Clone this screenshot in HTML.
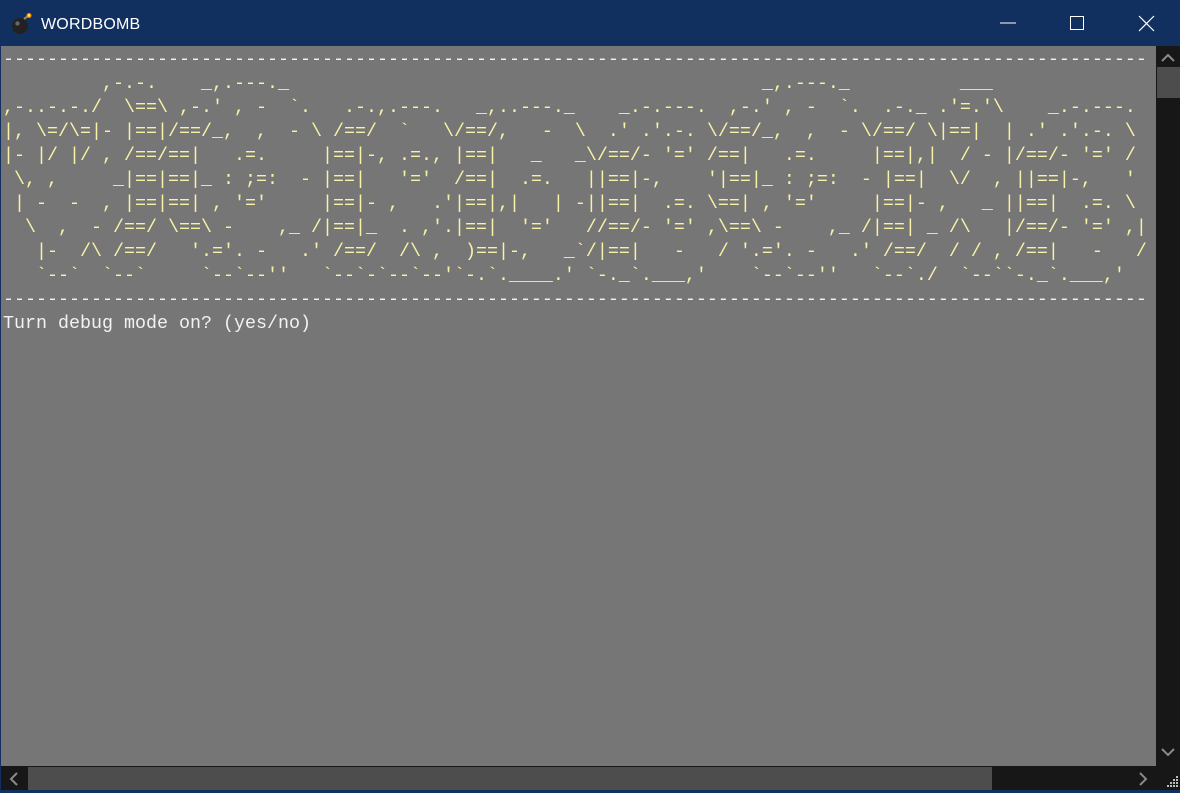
<!DOCTYPE html>
<html><head><meta charset="utf-8"><style>
body{margin:0;width:1180px;height:793px;overflow:hidden;background:#12305f;position:relative;font-family:"Liberation Sans",sans-serif}
#title{position:absolute;left:0;top:0;width:1180px;height:46px;background:#12305f;color:#fff}
#title .t{position:absolute;left:41px;top:16px;font-size:16px;letter-spacing:0.2px}
#con{position:absolute;left:1px;top:46px;width:1155px;height:720px;background:#767676;overflow:hidden}
pre{margin:0;position:absolute;left:2px;top:2px;font-family:"Liberation Mono",monospace;font-size:18.33px;line-height:24px;color:#f2f2f2}
.y{color:#f9f1a5}
#vs{position:absolute;left:1156px;top:46px;width:24px;height:720px;background:#171717}
#vt{position:absolute;left:1157px;top:67px;width:23px;height:31px;background:#4d4d4d}
#hs{position:absolute;left:1px;top:766px;width:1155px;height:24px;background:#171717}
#ht{position:absolute;left:28px;top:767px;width:964px;height:23px;background:#4d4d4d}
#corner{position:absolute;left:1156px;top:766px;width:24px;height:24px;background:#171717}
</style></head><body>
<div id="title">
<svg style="position:absolute;left:10px;top:12px" width="24" height="24" viewBox="0 0 24 24"><circle cx="10" cy="14" r="8" fill="#222"/><circle cx="7.5" cy="11.5" r="2.2" fill="#666"/><path d="M14 7 L18 4" stroke="#a86" stroke-width="2"/><circle cx="19" cy="3.5" r="2.5" fill="#f80"/><circle cx="19" cy="3.5" r="1.2" fill="#ff4"/></svg>
<div class="t">WORDBOMB</div>
<svg style="position:absolute;left:1000px;top:14px" width="160" height="20"><line x1="0" y1="9" x2="16" y2="9" stroke="#fff"/><rect x="70.5" y="2.5" width="13" height="13" fill="none" stroke="#fff"/><path d="M139 2 L154 17 M154 2 L139 17" stroke="#fff" stroke-width="1.2"/></svg>
</div>
<div id="con"><pre>--------------------------------------------------------------------------------------------------------
<span class="y">         ,-.-.    _,.---._                                           _,.---._          ___
,-..-.-./  \==\ ,-.' , -  `.   .-.,.---.   _,..---._    _.-.---.  ,-.' , -  `.  .-._ .'=.'\    _.-.---.
|, \=/\=|- |==|/==/_,  ,  - \ /==/  `   \/==/,   -  \  .' .'.-. \/==/_,  ,  - \/==/ \|==|  | .' .'.-. \
|- |/ |/ , /==/==|   .=.     |==|-, .=., |==|   _   _\/==/- '=' /==|   .=.     |==|,|  / - |/==/- '=' /
 \, ,     _|==|==|_ : ;=:  - |==|   '='  /==|  .=.   ||==|-,    '|==|_ : ;=:  - |==|  \/  , ||==|-,   '
 | -  -  , |==|==| , '='     |==|- ,   .'|==|,|   | -||==|  .=. \==| , '='     |==|- ,   _ ||==|  .=. \
  \  ,  - /==/ \==\ -    ,_ /|==|_  . ,'.|==|  '='   //==/- '=' ,\==\ -    ,_ /|==| _ /\   |/==/- '=' ,|
   |-  /\ /==/   '.='. -   .' /==/  /\ ,  )==|-,   _`/|==|   -   / '.='. -   .' /==/  / / , /==|   -   /
   `--`  `--`     `--`--''   `--`-`--`--'`-.`.____.' `-._`.___,'    `--`--''   `--`./  `--``-._`.___,'</span>
--------------------------------------------------------------------------------------------------------
Turn debug mode on? (yes/no)</pre></div>
<div id="vs"></div><div id="vt"></div>
<svg style="position:absolute;left:1160px;top:52px" width="16" height="12"><path d="M2 9 L8 3 L14 9" stroke="#8a8a8a" stroke-width="2" fill="none"/></svg>
<svg style="position:absolute;left:1160px;top:746px" width="16" height="12"><path d="M2 3 L8 9 L14 3" stroke="#8a8a8a" stroke-width="2" fill="none"/></svg>
<div id="hs"></div><div id="ht"></div><div id="corner"></div>
<svg style="position:absolute;left:8px;top:771px" width="12" height="16"><path d="M9 2 L3 8 L9 14" stroke="#8a8a8a" stroke-width="2" fill="none"/></svg>
<svg style="position:absolute;left:1137px;top:771px" width="12" height="16"><path d="M3 2 L9 8 L3 14" stroke="#8a8a8a" stroke-width="2" fill="none"/></svg>
<svg style="position:absolute;left:1166px;top:776px" width="14" height="14" fill="#bbb"><rect x="10" y="0" width="2" height="2"/><rect x="7" y="3" width="2" height="2"/><rect x="10" y="3" width="2" height="2"/><rect x="4" y="6" width="2" height="2"/><rect x="7" y="6" width="2" height="2"/><rect x="10" y="6" width="2" height="2"/><rect x="1" y="9" width="2" height="2"/><rect x="4" y="9" width="2" height="2"/><rect x="7" y="9" width="2" height="2"/><rect x="10" y="9" width="2" height="2"/></svg>
</body></html>
